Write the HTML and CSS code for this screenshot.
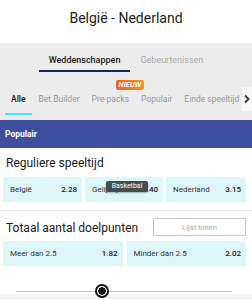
FILE: index.html
```html
<!DOCTYPE html>
<html lang="nl">
<head>
    <meta charset="UTF-8">
    <title>België - Nederland</title>
    <link rel="stylesheet" href="styles.css">
</head>
<body>
    <div class="titel">België - Nederland</div>

    <div class="kop">
        <div class="hoofdtabs">
            <div class="hoofdtab actief">Weddenschappen</div>
            <div class="hoofdtab">Gebeurtenissen</div>
        </div>

        <div class="subtabs">
            <div class="subtab actief">Alle</div>
            <div class="subtab">Bet Builder</div>
            <div class="subtab">Pre-packs<span class="nieuw">NIEUW</span></div>
            <div class="subtab">Populair</div>
            <div class="subtab">Einde speeltijd</div>
            <div class="meer">
                <svg width="8" height="10" viewBox="0 0 8 10"><path d="M2 1.5 L5.5 5 L2 8.5" fill="none" stroke="#333" stroke-width="1.8"/></svg>
            </div>
        </div>
    </div>

    <div class="sectie">Populair</div>

    <div class="markt">
        <div class="markt-kop">Reguliere speeltijd</div>
        <div class="odds drie">
            <div class="optie"><span>België</span><b>2.28</b></div>
            <div class="optie gelijk"><span>Gelijkspel</span><b>3.40</b>
                <div class="tooltip">Basketbal</div>
            </div>
            <div class="optie"><span>Nederland</span><b>3.15</b></div>
        </div>
    </div>

    <div class="markt">
        <div class="markt-kop">Totaal aantal doelpunten
            <button class="lijst">Lijst tonen</button>
        </div>
        <div class="odds twee">
            <div class="optie"><span>Meer dan 2.5</span><b>1.82</b></div>
            <div class="optie"><span>Minder dan 2.5</span><b>2.02</b></div>
        </div>
    </div>

    <div class="schuif">
        <div class="lijn"></div>
        <div class="knop"></div>
    </div>
</body>
</html>
```

FILE: styles.css
```css
body {
    margin: 0;
    font-family: Roboto, "Liberation Sans", sans-serif;
    background-color: #fff;
    color: #222;
    width: 252px;
    height: 300px;
    overflow: hidden;
}

.titel {
    height: 43px;
    line-height: 36px;
    text-align: center;
    font-size: 14px;
    color: #222;
}

.kop {
    background-color: #ececec;
}

.hoofdtabs {
    display: flex;
    justify-content: center;
    height: 30px;
    padding-left: 0;
}

.hoofdtab {
    padding: 0 10px;
    font-size: 9px;
    line-height: 34px;
    color: #aaa;
    border-bottom: 2px solid transparent;
    height: 27px;
}

.hoofdtab.actief {
    color: #222;
    font-weight: 500;
    border-bottom-color: #1c2550;
}

.subtabs {
    display: flex;
    height: 47px;
    position: relative;
    overflow: hidden;
    white-space: nowrap;
}

.subtab {
    position: relative;
    padding: 0 6px;
    font-size: 8.5px;
    line-height: 52px;
    height: 40px;
    color: #999;
    border-bottom: 2px solid transparent;
}

.subtab:first-child {
    margin-left: 5px;
    margin-right: 1px;
}

.subtab.actief {
    color: #111;
    font-weight: 500;
    border-bottom-color: #3fe9f0;
}

.nieuw {
    position: absolute;
    top: 7px;
    right: -9px;
    background: linear-gradient(90deg, #f2621c, #f7941e);
    color: #fff;
    font-size: 7.5px;
    font-weight: bold;
    font-style: italic;
    line-height: 10px;
    padding: 0 3px;
    border-radius: 2px;
}

.meer {
    position: absolute;
    right: 0;
    top: 14px;
    width: 10px;
    height: 24px;
    background-color: #f7f7f7;
    display: flex;
    align-items: center;
    justify-content: center;
}

.sectie {
    background-color: #3f4f9f;
    color: #fff;
    font-weight: bold;
    font-size: 8.5px;
    height: 28px;
    line-height: 28px;
    padding-left: 5px;
}

.markt {
    padding: 0 6px 8px 3px;
    border-bottom: 1px solid #e6e6e6;
}

.markt-kop {
    display: flex;
    justify-content: space-between;
    align-items: center;
    height: 29px;
    font-size: 12px;
    padding-left: 3px;
    color: #1a1a1a;
}

.markt + .markt {
    border-bottom: none;
    padding-bottom: 0;
}

.markt + .markt .markt-kop {
    height: 26px;
    padding-top: 4px;
}

.odds {
    display: grid;
    gap: 3px;
}

.odds.drie {
    grid-template-columns: 79px 78px 80px;
}

.odds.twee {
    grid-template-columns: 1fr 1fr;
    gap: 4px;
}

.optie {
    position: relative;
    background-color: #ddf6f8;
    height: 25px;
    display: flex;
    justify-content: space-between;
    align-items: center;
    padding: 0 5px 0 7px;
    font-size: 8px;
    color: #333;
}

.optie b {
    font-weight: 500;
    color: #222;
}

.tooltip {
    position: absolute;
    left: 21px;
    top: 4px;
    width: 42px;
    text-align: center;
    background-color: #474c4f;
    color: #fff;
    font-size: 7px;
    line-height: 11px;
    border-radius: 2px;
    box-shadow: 0 1px 2px rgba(0, 0, 0, 0.3);
}

.lijst {
    width: 93px;
    height: 18px;
    margin-top: -2px;
    background-color: #fff;
    border: 1px solid #c8c8c8;
    border-radius: 1px;
    color: #aaa;
    font-family: Roboto, "Liberation Sans", sans-serif;
    font-size: 7.5px;
    padding: 0;
}

.schuif {
    position: relative;
    height: 33px;
    background: linear-gradient(#fff 0, #fff 28px, #f3f3f3 29px);
}

.lijn {
    position: absolute;
    left: 16px;
    right: 20px;
    top: 25px;
    height: 1px;
    background-color: #c4c4c4;
}

.knop {
    position: absolute;
    left: 95px;
    top: 18px;
    width: 10px;
    height: 10px;
    border: 2px solid #111;
    border-radius: 50%;
    background: radial-gradient(circle, #111 0, #111 3.5px, #fff 4px);
}
```
